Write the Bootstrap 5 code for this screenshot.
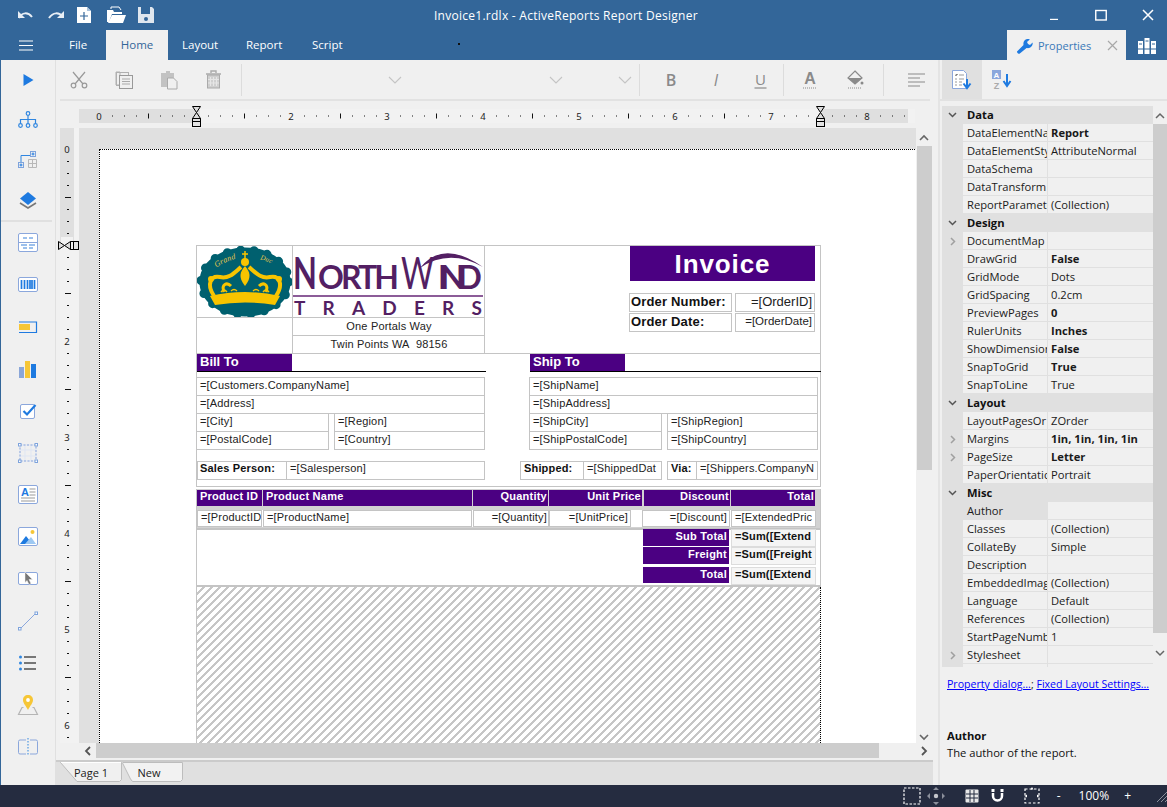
<!DOCTYPE html>
<html lang="en">
<head>
<meta charset="utf-8">
<title>Invoice1.rdlx - ActiveReports Report Designer</title>
<link href="https://cdn.jsdelivr.net/npm/bootstrap@5.3.0/dist/css/bootstrap.min.css" rel="stylesheet">
<style>
html,body{margin:0;background:#f0f0f0;overflow:hidden}
body{font-family:"Open Sans","Noto Sans",sans-serif;font-size:11.2px;color:#1a1a1a;line-height:1}
svg{display:block;flex:none}
.app{width:1167px;height:807px;overflow:hidden}
.topbar{background:#336699;height:60px;color:#fff;flex:none}
.bar-row{height:30px}
.qa{width:29px}
.qa-wrap{padding-left:13px;gap:2px}
.win-title{font-size:12px;position:absolute;left:434px;top:9px;line-height:14px;letter-spacing:.022em}
.win-ctl{margin-left:auto;margin-right:-4px}
.win-btn{width:47px;height:30px}
.burger{width:56px;padding-left:19px}
.mtab{height:30px;font-size:11.5px;color:#fff}
.mtab-on{background:#f0f0f0;color:#336699}
.mtab-file{width:50px;padding-left:13px}
.mtab-home{width:62px;justify-content:center}
.mtab-lay{width:64px;padding-left:14px}
.mtab-rep{width:66px;padding-left:14px}
.mtab-scr{width:60px;padding-left:14px}
.mdot{position:absolute;left:458px;top:43px;width:2px;height:2px;background:#111}
.prop-tab{margin-left:auto;width:119px;height:30px;background:#f0f0f0;color:#3a78b8;font-size:11px;gap:5px;padding-left:9px}
.prop-x{margin-left:auto;margin-right:8px}
.lib-btn{width:41px;height:30px}
.mainrow{height:725px;min-height:0}
.rail{width:56px;flex:none;border-left:1px solid #336699;border-right:1px solid #e0e0e0;overflow:hidden;background:#f0f0f0}
.rb1{height:40px;flex:none}
.rb2{height:42px;flex:none}
.railsep{height:2px;background:#e0e0e0;margin-right:3px;flex:none}
.center{width:882px;flex:none;min-width:0}
.tools{height:41px;border-bottom:2px solid #e2e2e2;margin:0 8px 0 4px;flex:none;margin-left:4px}
.tshift{margin-left:-4px}
.tbtn{width:45px;height:39px;flex:none}
.tsep{width:1px;height:32px;background:#dcdcdc;flex:none}
.ddown{height:39px;flex:none;padding-right:7px}
.dd1{width:167px}
.dd2{width:161px}
.dd3{width:69px}
.g3{margin-left:3px}
.g5{margin-left:5px}
.g6{margin-left:6px}
.g8{margin-left:8px}
.g10{margin-left:10px}
.hruler{height:27px;flex:none;padding-left:23px}
.workarea{height:615px;flex:none}
.vruler{width:23px;flex:none}
.surface{width:837px;flex:none;background:#e0e0e0;overflow:hidden}
.sheet{margin:21px 0 0 20px;width:820px;height:900px;background:#fff;border-left:1px dotted #000;border-top:1px dotted #000;position:relative}
.vscroll{width:16px;flex:none;background:#f0f0f0}
.vup{height:18px}
.vthumb{height:324px;background:#cdcdcd;margin:0 0 0 1px}
.vdown{margin-top:auto;margin-bottom:2px}
.hscrollrow{height:15px;flex:none;margin-left:23px;width:853px}
.hs-a{width:17px;flex:none;background:#f0f0f0}
.hthumb{width:783px;background:#cdcdcd;flex:none}
.hs-e{flex:1;background:#f0f0f0}
.tabstrip{height:27px;flex:none;background:#e0e0e0;padding-top:4px;margin-right:5px;position:relative}
.tabstrip::before{content:"";position:absolute;left:0;right:0;top:0;height:4px;background:#f0f0f0;border-bottom:2px solid #cbcbcb}
.ptab{position:relative;height:20px;font-size:11px;color:#222}
.ptab svg{position:absolute;left:0;top:0}
.ptab span{position:relative;display:block;text-align:center;line-height:21px}
.ptab-1{width:62px;margin-left:4px}
.ptab-2{width:61px}
.ptab-2 span{padding-right:7px}
.panel{width:229px;flex:none;border-left:2px solid #e4e4e4;background:#f0f0f0}
.ptools{height:41px;border-bottom:2px solid #e2e2e2;flex:none}
.ptbtn{width:40px;height:39px;margin-left:2px}
.ptbtn-on{background:#e0e0e0}
.ptbtn-2{margin-left:0}
.gridwrap{height:561px;margin-top:5px;padding-left:2px;flex:none}
.pgrid{width:211px;flex:none;overflow:hidden;height:561px}
.pr{height:18px;display:flex;background:#f0f0f0}
.pr-gut{width:21px;background:#e0e0e0;flex:none;display:flex;align-items:center;justify-content:center}
.pr-n,.pr-v{height:18px;line-height:17px;border-bottom:1px solid #e0e0e0;white-space:nowrap;overflow:hidden;padding-left:4px}
.pr-n{width:85px;flex:none;border-right:1px solid #e0e0e0}
.pr-n-sel{background:#e0e0e0}
.pr-v{flex:1;padding-left:3px;white-space:nowrap}
.pr-b{font-weight:700}
.pr-h{background:#e0e0e0;font-weight:700;line-height:18px;color:#111}
.pr-h span{padding-left:4px}
.pscroll{width:14px;flex:none;background:#f0f0f0}
.pscroll-up{height:18px}
.pscroll-th{height:509px;background:#cdcdcd}
.pscroll-dn{margin-top:17px}
.plinks{margin:10px 0 0 7px;line-height:14px;height:50px;flex:none;font-size:10.6px}
.plinks a{color:#0000ff}
.pdesc{margin:0 0 0 7px;line-height:17px;color:#111}
.pdesc b{display:block}
.status{height:22px;background:#252c40;color:#fff;flex:none;justify-content:flex-end;font-size:12px}
.s1{margin-right:6px}.s2{margin-right:20px}.s3{margin-right:12px}.s4{margin-right:19px}
.szoom{margin:0 15px 0 16px}
.sgrip{margin-left:25px}
.sminus{width:8px;text-align:center;margin-left:14px}

/* Report design canvas: controls sit where the report layout puts them */
.rpt{position:absolute;left:96px;top:95px;width:625px;height:520px;font-family:"Liberation Sans",Arial,sans-serif;font-size:11px;color:#222;letter-spacing:.17px}
.ct{position:absolute;border:1px solid #c4c4c4;overflow:hidden;white-space:nowrap;padding:0 2px 0 3px;line-height:15px;background:transparent}
.pf{background:#4b0082;color:#fff;font-weight:700;border:0;letter-spacing:.25px;line-height:14px}
.ra{text-align:right}
.ca{text-align:center}
.wt{background:#fff}
.ln{position:absolute;background:#000;height:1px}
.frame1{left:0;top:0;width:625px;height:109px}
.frame2{left:0;top:108px;width:625px;height:134px}
.logoA{left:0;top:0;width:97px;height:73px;padding:0}
.logoB{left:96px;top:0;width:193px;height:73px;padding:0}
.emptyA{left:0;top:72px;width:97px;height:37px}
.adr1{left:96px;top:72px;width:193px;height:19px;line-height:16px}
.adr2{left:96px;top:90px;width:193px;height:19px;line-height:16px}
.inv{left:434px;top:1px;width:185px;height:35px;font-size:26px;line-height:36px;text-align:center;letter-spacing:.9px;padding:0}
.ol1{left:433px;top:48px;width:103px;height:19px;font-weight:700;font-size:13px;padding:0 1px;color:#111;line-height:16px}
.ol2{left:433px;top:68px;width:103px;height:19px;font-weight:700;font-size:13px;padding:0 1px;color:#111;line-height:16px}
.ov1{left:539px;top:48px;width:80px;height:19px;font-size:13px;text-align:right;line-height:16px;letter-spacing:0}
.ov2{left:539px;top:68px;width:80px;height:19px;font-size:11.5px;text-align:right;line-height:15px;letter-spacing:0}
.bill{left:1px;top:109px;width:95px;height:17px;font-size:13px;padding:0 3px;line-height:16px;letter-spacing:0}
.ship{left:334px;top:109px;width:95px;height:17px;font-size:13px;padding:0 3px;line-height:16px;letter-spacing:0}
.ln1{left:1px;top:126px;width:289px}
.ln2{left:334px;top:126px;width:291px}
.a1{left:0;top:132px;width:289px;height:19px}
.a2{left:0;top:150px;width:289px;height:19px}
.a3{left:0;top:168px;width:133px;height:19px}
.a4{left:138px;top:168px;width:151px;height:19px}
.a5{left:0;top:186px;width:133px;height:19px}
.a6{left:138px;top:186px;width:151px;height:19px}
.b1{left:333px;top:132px;width:289px;height:19px}
.b2{left:333px;top:150px;width:289px;height:19px}
.b3{left:333px;top:168px;width:133px;height:19px}
.b4{left:471px;top:168px;width:151px;height:19px}
.b5{left:333px;top:186px;width:133px;height:19px}
.b6{left:471px;top:186px;width:151px;height:19px}
.sp1{left:1px;top:216px;width:90px;height:19px;font-weight:700;padding:0 2px;line-height:13px;color:#111}
.sp2{left:90px;top:216px;width:199px;height:19px;line-height:13px}
.sh1{left:324px;top:216px;width:64px;height:19px;font-weight:700;line-height:13px;color:#111}
.sh2{left:387px;top:216px;width:79px;height:19px;line-height:13px}
.vi1{left:471px;top:216px;width:30px;height:19px;font-weight:700;line-height:13px;color:#111}
.vi2{left:500px;top:216px;width:122px;height:19px;line-height:13px}
.bandA{left:0;top:244px;width:625px;height:40px;background:#d2d2d2;border:0;border-left:1px solid #c4c4c4;border-right:1px solid #c4c4c4}
.hc1,.hc2,.hc3,.hc4,.hc5,.hc6{top:245px;height:16px;line-height:13px;padding:0 1px 0 3px}
.hc1{left:1px;width:65px}
.hc2{left:67px;width:209px}
.hc3{left:277px;width:75px}
.hc4{left:353px;width:93px}
.hc5{left:448px;width:86px}
.hc6{left:535px;width:84px}
.rowbg{left:1px;top:265px;width:619px;height:17px;background:#fff;border:0}
.dc1,.dc2,.dc3,.dc4,.dc5,.dc6{top:265px;height:17px;line-height:13px}
.dc1{left:1px;width:65px}
.dc2{left:67px;width:209px}
.dc3{left:277px;width:76px;padding-right:1px}
.dc4{left:353px;width:82px}
.dc5{left:446px;width:88px}
.dc6{left:535px;width:85px}
.foot{left:0;top:283px;width:625px;height:59px;background:#fff;border-bottom:2px solid #c4c4c4;border-top:2px solid #c4c4c4}
.fl1,.fl2,.fl3{left:447px;width:86px;padding:0 2px 0 3px}
.fl1{top:284px;height:17px}
.fl2{top:302px;height:17px}
.fl3{top:322px;height:16px}
.vv{left:535px;width:85px;height:18px;background:#f5f5f5;font-weight:700;border-color:#dcdcdc;line-height:13px;letter-spacing:.15px;color:#111}
.vv1{top:284px}
.vv2{top:302px}
.vv3{top:322px}
.hatch{left:0;top:342px;width:625px;height:170px;border:0;border-left:1px solid #c4c4c4;border-right:1px dotted #000;background:repeating-linear-gradient(135deg,#fff 0,#fff 3.7px,#c6c6c6 3.7px,#c6c6c6 5.66px)}
.lg-svg{position:absolute;left:0;top:0}
</style>
</head>
<body>
<div class="app d-flex flex-column">

<header class="topbar position-relative">
  <div class="bar-row d-flex align-items-center">
    <div class="d-flex align-items-center qa-wrap">
      <div class="qa"><svg width="24" height="16" viewBox="0 0 24 16"><path d="M6 11C9 5 15 5 19 10" fill="none" stroke="#e8eef5" stroke-width="2"/><path d="M5 4v7h7z" fill="#e8eef5"/></svg></div>
      <div class="qa"><svg width="24" height="16" viewBox="0 0 24 16"><path d="M5 11C9 5 15 5 19 10" fill="none" stroke="#e8eef5" stroke-width="2"/><path d="M20 4v7h-7z" fill="#e8eef5"/></svg></div>
      <div class="qa"><svg width="18" height="18" viewBox="0 0 18 18"><path d="M2 1h10l4 4v12H2z" fill="#fff"/><path d="M12 1v4h4" fill="#a9c2dc"/><path d="M9 6v8M5 10h8" stroke="#336699" stroke-width="1.200"/></svg></div>
      <div class="qa"><svg width="21" height="18" viewBox="0 0 21 18"><path d="M1 16V4h6l1 2h8v2H6l-3 8z" fill="#fff"/><path d="M6 9h14l-3 8H2z" fill="#fff"/><path d="M5 3V1h8l2 3" fill="none" stroke="#fff"/></svg></div>
      <div class="qa"><svg width="18" height="18" viewBox="0 0 18 18"><path d="M1 1h14l2 2v14H1z" fill="#dfe6ee"/><rect x="4" y="1" width="9" height="7" fill="#336699"/><circle cx="9" cy="13" r="2" fill="#336699"/></svg></div>
    </div>
    <div class="win-title">Invoice1.rdlx - ActiveReports Report Designer</div>
    <div class="d-flex win-ctl">
      <div class="win-btn d-flex align-items-center justify-content-center"><svg width="10" height="10" viewBox="0 0 10 10"><path d="M1 9.500h8" stroke="#fff" stroke-width="1.400"/></svg></div>
      <div class="win-btn d-flex align-items-center justify-content-center"><svg width="12" height="12" viewBox="0 0 12 12"><rect x=".75" y="1.500" width="10.500" height="9.500" fill="none" stroke="#fff" stroke-width="1.400"/></svg></div>
      <div class="win-btn d-flex align-items-center justify-content-center"><svg width="12" height="12" viewBox="0 0 12 12"><path d="M1 1l10 10M11 1L1 11" stroke="#fff" stroke-width="1.500"/></svg></div>
    </div>
  </div>
  <div class="bar-row d-flex align-items-center">
    <div class="burger"><svg width="14" height="11" viewBox="0 0 14 11"><path d="M0 1h14M0 5.500h14M0 10h14" stroke="#fff" stroke-width="1.200"/></svg></div>
    <div class="mtab mtab-file d-flex align-items-center">File</div>
    <div class="mtab mtab-on mtab-home d-flex align-items-center">Home</div>
    <div class="mtab mtab-lay d-flex align-items-center">Layout</div>
    <div class="mtab mtab-rep d-flex align-items-center">Report</div>
    <div class="mtab mtab-scr d-flex align-items-center">Script</div>
    <div class="mdot"></div>
    <div class="prop-tab d-flex align-items-center">
      <svg width="17" height="17" viewBox="0 0 17 17"><path d="M1 14.500L7.500 8C7 5 8.500 2 12 2c.8 0 1.400.2 1.800.4L11 5l1 2 2 1 2.600-2.600c.6 3.400-2 6.400-6 5.600L3.500 16.800C2.500 17 .8 15.500 1 14.500z" fill="#1e7ae0"/></svg>
      <span>Properties</span>
      <svg class="prop-x" width="11" height="11" viewBox="0 0 11 11"><path d="M1 1l9 9M10 1l-9 9" stroke="#a8a8a8" stroke-width="1.200"/></svg>
    </div>
    <div class="lib-btn d-flex align-items-center justify-content-center"><svg width="18" height="17" viewBox="0 0 18 17"><path d="M0 4h5v13H0zM6.500 1h5v16h-5zM13 4h5v13h-5z" fill="#fff"/><path d="M0 12h18" stroke="#336699"/><path d="M1 7h3M7.500 4h3M14 7h3" stroke="#336699"/></svg></div>
  </div>
</header>

<div class="mainrow d-flex">
  <nav class="rail d-flex flex-column">
    <div class="rb1 d-flex align-items-center justify-content-center"><svg width="20" height="20" viewBox="0 0 20 20"><path d="M5.500 4l10 6-10 6z" fill="#1e7ae0"/></svg></div>
    <div class="rb1 d-flex align-items-center justify-content-center"><svg width="22" height="20" viewBox="0 0 22 20"><g fill="none" stroke="#2f86e0" stroke-width="1.200"><circle cx="11" cy="3.500" r="1.800"/><circle cx="3.500" cy="15.500" r="1.800"/><circle cx="11" cy="15.500" r="1.800"/><circle cx="18.500" cy="15.500" r="1.800"/><path d="M11 5.500v8M3.500 13.500V9.500h15v4"/></g></svg></div>
    <div class="rb1 d-flex align-items-center justify-content-center"><svg width="22" height="22" viewBox="0 0 22 22"><g fill="none" stroke="#7ea3dc"><rect x="1.500" y="13.500" width="5" height="5"/><rect x="13.500" y="2.500" width="5" height="5"/><path d="M4 13V6.500h9" stroke="#2f86e0"/></g><path d="M2.500 16h3M4 14.500v3M14.500 5h3M16 3.500v3" stroke="#1e7ae0"/><path d="M11.500 10.500h8v8h-8zM15.500 10.500v8M11.500 14.500h8" fill="none" stroke="#b8b8b8"/></svg></div>
    <div class="rb1 d-flex align-items-center justify-content-center"><svg width="20" height="20" viewBox="0 0 20 20"><path d="M2 13l8 5 8-5" fill="none" stroke="#777" stroke-width="1.600"/><path d="M10 2l8 6.500L10 15 2 8.500z" fill="#1e7ae0"/></svg></div>
    <div class="railsep"></div>
    <div class="rb2 d-flex align-items-center justify-content-center"><svg width="22" height="22" viewBox="0 0 22 22"><rect x="1.500" y="1.500" width="19" height="18" rx="1.500" fill="#fff" stroke="#8ba7dc"/><path d="M1.500 10.500h19" stroke="#8ba7dc"/><path d="M6 6h4M12 6h4M4 13h6M12 13h6M6 16h4M12 16h4" stroke="#9cc0ec" stroke-width="2"/></svg></div>
    <div class="rb2 d-flex align-items-center justify-content-center"><svg width="22" height="18" viewBox="0 0 22 18"><rect x="1.500" y="1.500" width="19" height="14" rx="1.500" fill="#fff" stroke="#8ba7dc"/><path d="M4.500 4v9M7.500 4v9M10.500 4v9M13 4v9M15 4v9M17.500 4v9" stroke="#1e7ae0" stroke-width="1.700"/></svg></div>
    <div class="rb2 d-flex align-items-center justify-content-center"><svg width="20" height="14" viewBox="0 0 20 14"><path d="M1 2h17.500v10.500H1" fill="none" stroke="#1e7ae0" stroke-width="1.200"/><rect x="1" y="4" width="11" height="6" fill="#f6c636"/></svg></div>
    <div class="rb2 d-flex align-items-center justify-content-center"><svg width="20" height="20" viewBox="0 0 20 20"><rect x="1" y="8" width="5" height="11" fill="#8aa6d8"/><rect x="7" y="2" width="5" height="17" fill="#f6c636"/><rect x="13" y="5" width="5" height="14" fill="#1e7ae0"/></svg></div>
    <div class="rb2 d-flex align-items-center justify-content-center"><svg width="20" height="20" viewBox="0 0 20 20"><rect x="2.500" y="3.500" width="14" height="14" rx="1.500" fill="#fff" stroke="#8ba7dc"/><path d="M5.500 10l3.500 3.500L17.500 4" fill="none" stroke="#1e7ae0" stroke-width="2.200"/></svg></div>
    <div class="rb2 d-flex align-items-center justify-content-center"><svg width="22" height="22" viewBox="0 0 22 22"><path d="M3 3h16v16H3zM8 3v16M14 3v16M3 8h16M3 14h16" fill="none" stroke="#dfe6f3"/><rect x="3" y="3" width="16" height="16" fill="none" stroke="#8ba7dc" stroke-dasharray="2 1.500"/><g fill="#fff" stroke="#7ea3dc"><rect x="1.500" y="1.500" width="2.500" height="2.500"/><rect x="18" y="1.500" width="2.500" height="2.500"/><rect x="1.500" y="18" width="2.500" height="2.500"/><rect x="18" y="18" width="2.500" height="2.500"/></g></svg></div>
    <div class="rb2 d-flex align-items-center justify-content-center"><svg width="22" height="22" viewBox="0 0 22 22"><rect x="1.500" y="1.500" width="19" height="18" rx="1.500" fill="#fff" stroke="#8ba7dc"/><text x="4" y="11.500" font-family="Liberation Sans" font-weight="700" font-size="11" fill="#1e7ae0">A</text><path d="M12.500 5h6M12.500 8h6M12.500 11h6M4 14h14M4 17h14" stroke="#999"/></svg></div>
    <div class="rb2 d-flex align-items-center justify-content-center"><svg width="22" height="22" viewBox="0 0 22 22"><rect x="1.500" y="1.500" width="19" height="18" rx="1.500" fill="#fff" stroke="#8ba7dc"/><circle cx="15.500" cy="6" r="2" fill="#f6c636"/><path d="M3 18l6-8 4 5-2 3z" fill="#1e7ae0"/><path d="M8 18l6-7 5 7z" fill="#9dc8f2"/></svg></div>
    <div class="rb2 d-flex align-items-center justify-content-center"><svg width="22" height="18" viewBox="0 0 22 18"><rect x="1.500" y="2.500" width="19" height="12" rx="1.500" fill="#fff" stroke="#8ba7dc"/><path d="M8 2l7.500 7.500h-3.500l2 4-2 1-2-4-2 2z" fill="#777" stroke="#f0f0f0" stroke-width=".5"/></svg></div>
    <div class="rb2 d-flex align-items-center justify-content-center"><svg width="22" height="22" viewBox="0 0 22 22"><path d="M3 19L19 3" stroke="#8ba7dc"/><rect x="1.500" y="17.500" width="2.500" height="2.500" fill="#fff" stroke="#7ea3dc"/><rect x="18" y="2" width="2.500" height="2.500" fill="#fff" stroke="#7ea3dc"/></svg></div>
    <div class="rb2 d-flex align-items-center justify-content-center"><svg width="20" height="18" viewBox="0 0 20 18"><g fill="#2f86e0"><circle cx="2.500" cy="3" r="1.500"/><circle cx="2.500" cy="9" r="1.500"/><circle cx="2.500" cy="15" r="1.500"/></g><path d="M6 3h12M6 9h12M6 15h12" stroke="#777" stroke-width="2"/></svg></div>
    <div class="rb2 d-flex align-items-center justify-content-center"><svg width="22" height="22" viewBox="0 0 22 22"><path d="M6.500 13.500H5L1.500 20.500h19L17 13.500h-1.500" fill="none" stroke="#b5b5b5" stroke-width="1.200"/><path d="M11 1c-3 0-5 2-5 5 0 3 3 6 5 10 2-4 5-7 5-10 0-3-2-5-5-5z" fill="#f6c636"/><circle cx="11" cy="6" r="1.900" fill="#fff"/></svg></div>
    <div class="rb2 d-flex align-items-center justify-content-center"><svg width="22" height="20" viewBox="0 0 22 20"><path d="M9 3H3a1.500 1.500 0 0 0-1.500 1.500v11A1.500 1.500 0 0 0 3 17h6M13 3h6a1.500 1.500 0 0 1 1.500 1.500v11A1.500 1.500 0 0 1 19 17h-6" fill="none" stroke="#8ba7dc"/><path d="M11 1v18" stroke="#2f86e0" stroke-dasharray="1.500 1.500"/></svg></div>
    <div class="rb2 d-flex align-items-center justify-content-center"><svg width="22" height="20" viewBox="0 0 22 20"><path d="M1 20l3-6h3l3 6" fill="none" stroke="#8ba7dc"/><rect x="9.500" y="9.500" width="11" height="9" fill="none" stroke="#8ba7dc"/></svg></div>
  </nav>

  <main class="center d-flex flex-column">
    <div class="tools d-flex align-items-center">
      <div class="d-flex align-items-center tshift">
        <div class="tbtn d-flex align-items-center justify-content-center"><svg width="18" height="18" viewBox="0 0 18 18"><g fill="none" stroke="#999" stroke-width="1.200"><circle cx="3.500" cy="14.500" r="2.300"/><circle cx="14.500" cy="14.500" r="2.300"/><path d="M5 13L15 1M13 13L3 1"/></g></svg></div>
        <div class="tbtn d-flex align-items-center justify-content-center"><svg width="18" height="18" viewBox="0 0 18 18"><path d="M5 17V1H1v13h4" fill="none" stroke="#b0b0b0"/><rect x="1.500" y="1.500" width="12" height="13" fill="none" stroke="#b0b0b0"/><rect x="4.500" y="4.500" width="13" height="13" fill="#f0f0f0" stroke="#999"/><path d="M7 8h8M7 10.500h8M7 13h8" stroke="#aaa"/></svg></div>
        <div class="tbtn d-flex align-items-center justify-content-center"><svg width="18" height="20" viewBox="0 0 18 20"><path d="M1 3h5V1h4v2h4v14H1z" fill="#c2c2c2"/><path d="M7.500 8h6l3.500 3.500V19H7.500z" fill="#f0f0f0" stroke="#aaa"/></svg></div>
        <div class="tbtn d-flex align-items-center justify-content-center"><svg width="18" height="20" viewBox="0 0 18 20"><path d="M1 4h15M6 3V1h5v2" fill="none" stroke="#aaa" stroke-width="1.400"/><rect x="2.500" y="5" width="12" height="13" fill="#cfcfcf" stroke="#aaa"/><path d="M5.500 7v9M8.500 7v9M11.500 7v9M3 9.500h11M3 13h11" stroke="#e6e6e6"/></svg></div>
      </div>
      <div class="tsep g5"></div>
      <div class="ddown dd1 d-flex align-items-center justify-content-end"><svg width="14" height="8" viewBox="0 0 14 8"><path d="M1 1l6 6 6-6" fill="none" stroke="#c4c4c4" stroke-width="1.100"/></svg></div>
      <div class="ddown dd2 d-flex align-items-center justify-content-end"><svg width="14" height="8" viewBox="0 0 14 8"><path d="M1 1l6 6 6-6" fill="none" stroke="#c4c4c4" stroke-width="1.100"/></svg></div>
      <div class="ddown dd3 d-flex align-items-center justify-content-end"><svg width="14" height="8" viewBox="0 0 14 8"><path d="M1 1l6 6 6-6" fill="none" stroke="#c4c4c4" stroke-width="1.100"/></svg></div>
      <div class="tsep"></div>
      <div class="tbtn g8 d-flex align-items-center justify-content-center"><svg width="20" height="20" viewBox="0 0 20 20"><text x="10" y="16" text-anchor="middle" font-family="Open Sans" font-size="16" fill="#8a8a8a" font-weight="600">B</text></svg></div>
      <div class="tbtn d-flex align-items-center justify-content-center"><svg width="20" height="20" viewBox="0 0 20 20"><text x="10" y="16" text-anchor="middle" font-family="Open Sans" font-style="italic" font-size="16" fill="#8a8a8a">I</text></svg></div>
      <div class="tbtn d-flex align-items-center justify-content-center"><svg width="20" height="20" viewBox="0 0 20 20"><text x="9.500" y="14.500" text-anchor="middle" font-family="Open Sans" font-size="15" fill="#8a8a8a">U</text><path d="M3.500 18h12" stroke="#8a8a8a" stroke-width="1.200"/></svg></div>
      <div class="tsep"></div>
      <div class="tbtn g3 d-flex align-items-center justify-content-center"><svg width="20" height="22" viewBox="0 0 20 22"><text x="10" y="15" text-anchor="middle" font-family="Liberation Sans" font-weight="700" font-size="16" fill="#8a8a8a">A</text><path d="M3 19h14" stroke="#8a8a8a" stroke-dasharray="1 1" stroke-width="1.200"/></svg></div>
      <div class="tbtn d-flex align-items-center justify-content-center"><svg width="18" height="20" viewBox="0 0 18 20"><path d="M9 1l7 7-7 6-7-6z" fill="none" stroke="#8a8a8a" stroke-width="1.200"/><path d="M2 8h14l-7 6z" fill="#8a8a8a"/><circle cx="16" cy="13" r="1.500" fill="#8a8a8a"/><path d="M2 18h13" stroke="#8a8a8a" stroke-dasharray="1 1" stroke-width="1.200"/></svg></div>
      <div class="tsep g6"></div>
      <div class="tbtn g10 d-flex align-items-center justify-content-center"><svg width="17" height="14" viewBox="0 0 17 14"><path d="M0 1h17M0 5h12M0 9h17M0 13h12" stroke="#8a8a8a" stroke-width="1.100"/></svg></div>
    </div>

    <div class="hruler">
      <svg width="842" height="27" viewBox="0 0 842 27" font-family="Noto Sans,sans-serif" font-size="9.500" text-anchor="middle" fill="#222">
        <defs>
          <pattern id="tickh" width="96" height="6" patternUnits="userSpaceOnUse" x="21"><path d="M12.500 2.500v1M24.500 2.500v1M36.500 2.500v1M48.500 .5v5M60.500 2.500v1M72.500 2.500v1M84.500 2.500v1" stroke="#111"/></pattern>
        </defs>
        <rect x="0" y="8" width="836" height="14" fill="#f2f2f2"/>
        <rect x="0" y="8" width="117" height="14" fill="#dfdfdf"/>
        <rect x="741" y="8" width="88" height="14" fill="#dfdfdf"/>
        <rect x="21" y="12" width="808" height="6" fill="url(#tickh)"/>
        <rect x="13" y="9" width="12" height="12" fill="#dfdfdf"/><rect x="109" y="9" width="12" height="12" fill="#dfdfdf"/><rect x="205" y="9" width="12" height="12" fill="#f2f2f2"/><rect x="301" y="9" width="12" height="12" fill="#f2f2f2"/><rect x="397" y="9" width="12" height="12" fill="#f2f2f2"/><rect x="493" y="9" width="12" height="12" fill="#f2f2f2"/><rect x="589" y="9" width="12" height="12" fill="#f2f2f2"/><rect x="685" y="9" width="12" height="12" fill="#f2f2f2"/><rect x="781" y="9" width="12" height="12" fill="#dfdfdf"/>
        <text x="20" y="19">0</text><text x="212" y="19">2</text><text x="308" y="19">3</text><text x="404" y="19">4</text><text x="500" y="19">5</text><text x="596" y="19">6</text><text x="692" y="19">7</text><text x="788" y="19">8</text>
        <g fill="#ddd" stroke="#000"><path d="M113.500 5.500h8l-4 6 4 6h-8l4-6z"/><rect x="113.500" y="20.500" width="8" height="5" fill="#e4e4e4"/><path d="M113.500 20.500v-3h8v3" fill="none"/></g>
        <g fill="#ddd" stroke="#000"><path d="M737.500 5.500h8l-4 6 4 6h-8l4-6z"/><rect x="737.500" y="20.500" width="8" height="5" fill="#e4e4e4"/><path d="M737.500 20.500v-3h8v3" fill="none"/></g>
      </svg>
    </div>

    <div class="workarea d-flex">
      <div class="vruler">
        <svg width="23" height="615" viewBox="0 0 23 615" font-family="Noto Sans,sans-serif" font-size="9.500" text-anchor="middle" fill="#222">
          <defs>
            <pattern id="tickv" width="8" height="96" patternUnits="userSpaceOnUse" y="21"><path d="M3 12.500h2M3 24.500h2M3 36.500h2M1 48.500h6M3 60.500h2M3 72.500h2M3 84.500h2" stroke="#111"/></pattern>
          </defs>
          <rect x="4" width="19" height="615" fill="#f2f2f2"/>
          <rect x="4" width="14" height="117" fill="#dfdfdf"/>
          <rect x="7" y="21" width="8" height="594" fill="url(#tickv)"/>
          <rect x="5" y="109" width="12" height="16" fill="#f2f2f2"/>
          <text x="11" y="25">0</text><text x="11" y="217">2</text><text x="11" y="313">3</text><text x="11" y="409">4</text><text x="11" y="505">5</text><text x="11" y="601">6</text>
          <g fill="#ddd" stroke="#000"><path d="M2.500 113.500v8l6-4 6 4v-8l-6 4z"/><rect x="17.500" y="113.500" width="5" height="8" fill="#e4e4e4"/><path d="M17.500 113.500h-3v8h3" fill="none"/></g>
        </svg>
      </div>
      <div class="surface">
        <div class="sheet">
          <div class="rpt">
            <div class="ct frame1"></div>
            <div class="ct frame2"></div>
            <div class="ct logoA">
              <svg class="lg-svg" width="96" height="72" viewBox="0 0 96 72">
                <ellipse cx="48" cy="36" rx="43" ry="32" fill="#00606f" stroke="#00606f" stroke-width="5"/>
                <ellipse cx="48" cy="36" rx="44" ry="32" fill="none" stroke="#00606f" stroke-width="9" stroke-linecap="round" stroke-dasharray="0 13.500"/>
                <path id="archtxt" d="M16 24Q48 0 82 22" fill="none"/>
                <text font-family="Liberation Serif,serif" font-style="italic" font-size="8" fill="#e8c84a"><textPath href="#archtxt" startOffset="4">Grand</textPath></text>
                <text font-family="Liberation Serif,serif" font-style="italic" font-size="7" fill="#e8c84a"><textPath href="#archtxt" startOffset="50">Duc</textPath></text>
                <path d="M48 5v10M45 8h6" stroke="#f8c400" stroke-width="1.500"/>
                <circle cx="48" cy="16" r="4" fill="#f8c400"/>
                <path d="M48 20c5 6 7 11 0 20c-7-9-5-14 0-20z" fill="#f8c400"/>
                <g fill="none" stroke="#f8c400" stroke-width="4">
                  <path d="M17 50C9 38 14 29 23 31C32 33 37 27 44 21"/>
                  <path d="M79 50C87 38 82 29 73 31C64 33 59 27 52 21"/>
                </g>
                <g fill="none" stroke="#f8c400" stroke-width="3">
                  <path d="M27 46C24 38 30 36 34 40"/>
                  <path d="M69 46C72 38 66 36 62 40"/>
                </g>
                <g fill="#f8c400"><circle cx="14" cy="33" r="3"/><circle cx="82" cy="33" r="3"/></g>
                <path d="M13 50Q48 42 83 50L78 59Q48 54 18 59Z" fill="#f8c400"/>
                <path d="M24 46q3-4 6 0M34 45q3-3 6 0M56 45q3-3 6 0M66 46q3-4 6 0" fill="none" stroke="#f8c400" stroke-width="1.300"/>
              </svg>
            </div>
            <div class="ct logoB">
              <svg class="lg-svg" width="192" height="72" viewBox="0 0 192 72" fill="#531f63" font-family="Lato,Liberation Sans,sans-serif" font-weight="700">
                <text x="0" y="43" font-size="43" textLength="24" lengthAdjust="spacingAndGlyphs">N</text>
                <text x="25" y="43" font-size="32" textLength="81" lengthAdjust="spacing">ORTH</text>
                <text x="108" y="43" font-size="44" textLength="33" lengthAdjust="spacingAndGlyphs" font-weight="400">W</text>
                <text x="145" y="43" font-size="32" textLength="44" lengthAdjust="spacing">IND</text>
                <path d="M127 22Q150-7 190 21Q156 2 127 22Z"/>
                <rect x="0" y="49" width="190" height="2" fill="#8c5c98"/>
                <text x="1" y="69" font-size="19" textLength="188" lengthAdjust="spacing">TRADERS</text>
              </svg>
            </div>
            <div class="ct emptyA"></div>
            <div class="ct adr1 ca">One Portals Way</div>
            <div class="ct adr2 ca">Twin Points WA&nbsp; 98156</div>
            <div class="ct pf inv">Invoice</div>
            <div class="ct ol1">Order Number:</div>
            <div class="ct ov1">=[OrderID]</div>
            <div class="ct ol2">Order Date:</div>
            <div class="ct ov2">=[OrderDate]</div>
            <div class="ct pf bill">Bill To</div>
            <div class="ln ln1"></div>
            <div class="ct pf ship">Ship To</div>
            <div class="ln ln2"></div>
            <div class="ct a1">=[Customers.CompanyName]</div>
            <div class="ct a2">=[Address]</div>
            <div class="ct a3">=[City]</div>
            <div class="ct a4">=[Region]</div>
            <div class="ct a5">=[PostalCode]</div>
            <div class="ct a6">=[Country]</div>
            <div class="ct b1">=[ShipName]</div>
            <div class="ct b2">=[ShipAddress]</div>
            <div class="ct b3">=[ShipCity]</div>
            <div class="ct b4">=[ShipRegion]</div>
            <div class="ct b5">=[ShipPostalCode]</div>
            <div class="ct b6">=[ShipCountry]</div>
            <div class="ct sp1">Sales Person:</div>
            <div class="ct sp2">=[Salesperson]</div>
            <div class="ct sh1">Shipped:</div>
            <div class="ct sh2">=[ShippedDat</div>
            <div class="ct vi1">Via:</div>
            <div class="ct vi2">=[Shippers.CompanyN</div>
            <div class="ct bandA"></div>
            <div class="ct pf hc1">Product ID</div>
            <div class="ct pf hc2">Product Name</div>
            <div class="ct pf hc3 ra">Quantity</div>
            <div class="ct pf hc4 ra">Unit Price</div>
            <div class="ct pf hc5 ra">Discount</div>
            <div class="ct pf hc6 ra">Total</div>
            <div class="ct rowbg"></div>
            <div class="ct dc1 wt">=[ProductID</div>
            <div class="ct dc2 wt">=[ProductName]</div>
            <div class="ct dc3 wt ra">=[Quantity]</div>
            <div class="ct dc4 wt ra">=[UnitPrice]</div>
            <div class="ct dc5 wt ra">=[Discount]</div>
            <div class="ct dc6 wt">=[ExtendedPric</div>
            <div class="ct foot"></div>
            <div class="ct pf fl1 ra">Sub Total</div>
            <div class="ct pf fl2 ra">Freight</div>
            <div class="ct pf fl3 ra">Total</div>
            <div class="ct vv vv1">=Sum([Extend</div>
            <div class="ct vv vv2">=Sum([Freight</div>
            <div class="ct vv vv3">=Sum([Extend</div>
            <div class="ct hatch"></div>
          </div>
        </div>
      </div>
      <div class="vscroll d-flex flex-column">
        <div class="vup d-flex align-items-center justify-content-center"><svg width="10" height="7" viewBox="0 0 10 7"><path d="M1 6l4-4 4 4" fill="none" stroke="#666" stroke-width="1.600"/></svg></div>
        <div class="vthumb"></div>
        <svg class="vdown align-self-center" width="10" height="7" viewBox="0 0 10 7"><path d="M1 1l4 4 4-4" fill="none" stroke="#666" stroke-width="1.600"/></svg>
      </div>
    </div>

    <div class="hscrollrow d-flex">
      <div class="hs-a d-flex align-items-center justify-content-center"><svg width="7" height="10" viewBox="0 0 7 10"><path d="M6 1L2 5l4 4" fill="none" stroke="#555" stroke-width="1.800"/></svg></div>
      <div class="hthumb"></div>
      <div class="hs-e d-flex align-items-center justify-content-end pe-1"><svg width="7" height="10" viewBox="0 0 7 10"><path d="M1 1l4 4-4 4" fill="none" stroke="#555" stroke-width="1.800"/></svg></div>
    </div>

    <div class="tabstrip d-flex">
      <div class="ptab ptab-1">
        <svg width="62" height="20" viewBox="0 0 62 20"><path d="M.5.5h61v17l-2 2H17z" fill="#f0f0f0" stroke="#bdbdbd"/><path d="M1 .5h60" stroke="#fff"/></svg>
        <span>Page 1</span>
      </div>
      <div class="ptab ptab-2">
        <svg width="61" height="20" viewBox="0 0 61 20"><path d="M.5 1l8 16 2 2.500h48l2-2V.5H.5" fill="#f2f2f2" stroke="#bdbdbd"/></svg>
        <span>New</span>
      </div>
    </div>
  </main>

  <aside class="panel d-flex flex-column">
    <div class="ptools d-flex">
      <div class="ptbtn ptbtn-on d-flex align-items-center justify-content-center">
        <svg width="22" height="22" viewBox="0 0 22 22"><path d="M1.500 1.500h11l3 3v15H1.500z" fill="#fff" stroke="#8ba7dc"/><path d="M4 6l1 1 2-2M4 10h2M4 13h2M4 16h2M8 6h5M8 10h5M8 13h3M8 16h3" stroke="#999"/><path d="M16 10v8M12.500 14.500l3.500 4.500 3.500-4.500" fill="none" stroke="#1e7ae0" stroke-width="2"/></svg>
      </div>
      <div class="ptbtn ptbtn-2 d-flex align-items-center justify-content-center">
        <svg width="22" height="22" viewBox="0 0 22 22"><rect x="1" y="1" width="9" height="9" fill="#8ba7dc"/><text x="5.500" y="8.500" font-family="Liberation Sans" font-weight="700" font-size="8" text-anchor="middle" fill="#fff">A</text><text x="5.500" y="19.500" font-family="Liberation Sans" font-weight="700" font-size="9" text-anchor="middle" fill="#aaa">Z</text><path d="M16 5v11M12.500 12l3.500 5 3.500-5" fill="none" stroke="#1e7ae0" stroke-width="2"/></svg>
      </div>
    </div>
    <div class="gridwrap d-flex">
      <div class="pgrid">
        <div class="pr pr-h"><div class="pr-gut"><svg width="9" height="6" viewBox="0 0 9 6"><path d="M1 1l3.500 3.500L8 1" fill="none" stroke="#555" stroke-width="1.500"/></svg></div><span>Data</span></div>
        <div class="pr"><div class="pr-gut"></div><div class="pr-n">DataElementNa</div><div class="pr-v pr-b">Report</div></div>
        <div class="pr"><div class="pr-gut"></div><div class="pr-n">DataElementSty</div><div class="pr-v">AttributeNormal</div></div>
        <div class="pr"><div class="pr-gut"></div><div class="pr-n">DataSchema</div><div class="pr-v"></div></div>
        <div class="pr"><div class="pr-gut"></div><div class="pr-n">DataTransform</div><div class="pr-v"></div></div>
        <div class="pr"><div class="pr-gut"></div><div class="pr-n">ReportParamete</div><div class="pr-v">(Collection)</div></div>
        <div class="pr pr-h"><div class="pr-gut"><svg width="9" height="6" viewBox="0 0 9 6"><path d="M1 1l3.500 3.500L8 1" fill="none" stroke="#555" stroke-width="1.500"/></svg></div><span>Design</span></div>
        <div class="pr"><div class="pr-gut"><svg width="6" height="9" viewBox="0 0 6 9"><path d="M1 1l3.500 3.500L1 8" fill="none" stroke="#a0a0a0" stroke-width="1.500"/></svg></div><div class="pr-n">DocumentMap</div><div class="pr-v"></div></div>
        <div class="pr"><div class="pr-gut"></div><div class="pr-n">DrawGrid</div><div class="pr-v pr-b">False</div></div>
        <div class="pr"><div class="pr-gut"></div><div class="pr-n">GridMode</div><div class="pr-v">Dots</div></div>
        <div class="pr"><div class="pr-gut"></div><div class="pr-n">GridSpacing</div><div class="pr-v">0.2cm</div></div>
        <div class="pr"><div class="pr-gut"></div><div class="pr-n">PreviewPages</div><div class="pr-v pr-b">0</div></div>
        <div class="pr"><div class="pr-gut"></div><div class="pr-n">RulerUnits</div><div class="pr-v pr-b">Inches</div></div>
        <div class="pr"><div class="pr-gut"></div><div class="pr-n">ShowDimension</div><div class="pr-v pr-b">False</div></div>
        <div class="pr"><div class="pr-gut"></div><div class="pr-n">SnapToGrid</div><div class="pr-v pr-b">True</div></div>
        <div class="pr"><div class="pr-gut"></div><div class="pr-n">SnapToLine</div><div class="pr-v">True</div></div>
        <div class="pr pr-h"><div class="pr-gut"><svg width="9" height="6" viewBox="0 0 9 6"><path d="M1 1l3.500 3.500L8 1" fill="none" stroke="#555" stroke-width="1.500"/></svg></div><span>Layout</span></div>
        <div class="pr"><div class="pr-gut"></div><div class="pr-n">LayoutPagesOr</div><div class="pr-v">ZOrder</div></div>
        <div class="pr"><div class="pr-gut"><svg width="6" height="9" viewBox="0 0 6 9"><path d="M1 1l3.500 3.500L1 8" fill="none" stroke="#a0a0a0" stroke-width="1.500"/></svg></div><div class="pr-n">Margins</div><div class="pr-v pr-b">1in, 1in, 1in, 1in</div></div>
        <div class="pr"><div class="pr-gut"><svg width="6" height="9" viewBox="0 0 6 9"><path d="M1 1l3.500 3.500L1 8" fill="none" stroke="#a0a0a0" stroke-width="1.500"/></svg></div><div class="pr-n">PageSize</div><div class="pr-v pr-b">Letter</div></div>
        <div class="pr"><div class="pr-gut"></div><div class="pr-n">PaperOrientatic</div><div class="pr-v">Portrait</div></div>
        <div class="pr pr-h"><div class="pr-gut"><svg width="9" height="6" viewBox="0 0 9 6"><path d="M1 1l3.500 3.500L8 1" fill="none" stroke="#555" stroke-width="1.500"/></svg></div><span>Misc</span></div>
        <div class="pr"><div class="pr-gut"></div><div class="pr-n pr-n-sel">Author</div><div class="pr-v"></div></div>
        <div class="pr"><div class="pr-gut"></div><div class="pr-n">Classes</div><div class="pr-v">(Collection)</div></div>
        <div class="pr"><div class="pr-gut"></div><div class="pr-n">CollateBy</div><div class="pr-v">Simple</div></div>
        <div class="pr"><div class="pr-gut"></div><div class="pr-n">Description</div><div class="pr-v"></div></div>
        <div class="pr"><div class="pr-gut"></div><div class="pr-n">EmbeddedImag</div><div class="pr-v">(Collection)</div></div>
        <div class="pr"><div class="pr-gut"></div><div class="pr-n">Language</div><div class="pr-v">Default</div></div>
        <div class="pr"><div class="pr-gut"></div><div class="pr-n">References</div><div class="pr-v">(Collection)</div></div>
        <div class="pr"><div class="pr-gut"></div><div class="pr-n">StartPageNumb</div><div class="pr-v">1</div></div>
        <div class="pr"><div class="pr-gut"><svg width="6" height="9" viewBox="0 0 6 9"><path d="M1 1l3.500 3.500L1 8" fill="none" stroke="#a0a0a0" stroke-width="1.500"/></svg></div><div class="pr-n">Stylesheet</div><div class="pr-v"></div></div>
        <div class="pr"><div class="pr-gut"></div><div class="pr-n"></div><div class="pr-v"></div></div>
      </div>
      <div class="pscroll d-flex flex-column">
        <div class="pscroll-up d-flex align-items-center justify-content-center"><svg width="10" height="7" viewBox="0 0 10 7"><path d="M1 6l4-4 4 4" fill="none" stroke="#666" stroke-width="1.500"/></svg></div>
        <div class="pscroll-th"></div>
        <svg class="pscroll-dn align-self-center" width="10" height="7" viewBox="0 0 10 7"><path d="M1 1l4 4 4-4" fill="none" stroke="#666" stroke-width="1.500"/></svg>
      </div>
    </div>
    <div class="plinks"><a href="#">Property dialog...</a>; <a href="#">Fixed Layout Settings...</a></div>
    <div class="pdesc"><b>Author</b>The author of the report.</div>
  </aside>
</div>

<footer class="status d-flex align-items-center">
  <svg class="s1" width="18" height="18" viewBox="0 0 18 18"><rect x="1" y="1" width="16" height="16" fill="none" stroke="#fff" stroke-width="1.200" stroke-dasharray="2.500 1.500"/></svg>
  <svg class="s2" width="18" height="18" viewBox="0 0 18 18"><g fill="#8b8f9b"><path d="M9 0l3 3H6zM9 18l3-3H6zM0 9l3-3v6zM18 9l-3-3v6z"/><circle cx="9" cy="9" r="2.200" fill="#c4c6cc"/></g></svg>
  <svg class="s3" width="14" height="14" viewBox="0 0 14 14"><rect x=".5" y=".5" width="13" height="13" rx="1" fill="#e8e8e8"/><path d="M5 1v12M9 1v12M1 5h12M1 9h12" stroke="#252c40" stroke-width="1"/></svg>
  <svg class="s4" width="13" height="14" viewBox="0 0 13 14"><path d="M2 0v3" stroke="#fff" stroke-width="3"/><path d="M11 0v3" stroke="#fff" stroke-width="3"/><path d="M2 4v3a4.500 4.500 0 0 0 9 0V4" fill="none" stroke="#fff" stroke-width="2.500"/></svg>
  <svg width="18" height="18" viewBox="0 0 18 18"><rect x="2" y="2" width="14" height="14" fill="none" stroke="#fff" stroke-width="1.200" stroke-dasharray="2.500 2"/><path d="M9 0l1.500 2.500h-3zM1.500 9l2.500-1.500v3zM16.500 9L14 7.500v3z" fill="#fff"/></svg>
  <span class="sminus">-</span>
  <span class="szoom">100%</span>
  <span>+</span>
  <svg class="sgrip" width="11" height="11" viewBox="0 0 11 11"><path d="M11 1L1 11M11 5l-6 6M11 9l-2 2" stroke="#8b8f9b"/></svg>
</footer>

</div>
<script src="https://cdn.jsdelivr.net/npm/bootstrap@5.3.0/dist/js/bootstrap.bundle.min.js"></script>
</body>
</html>
